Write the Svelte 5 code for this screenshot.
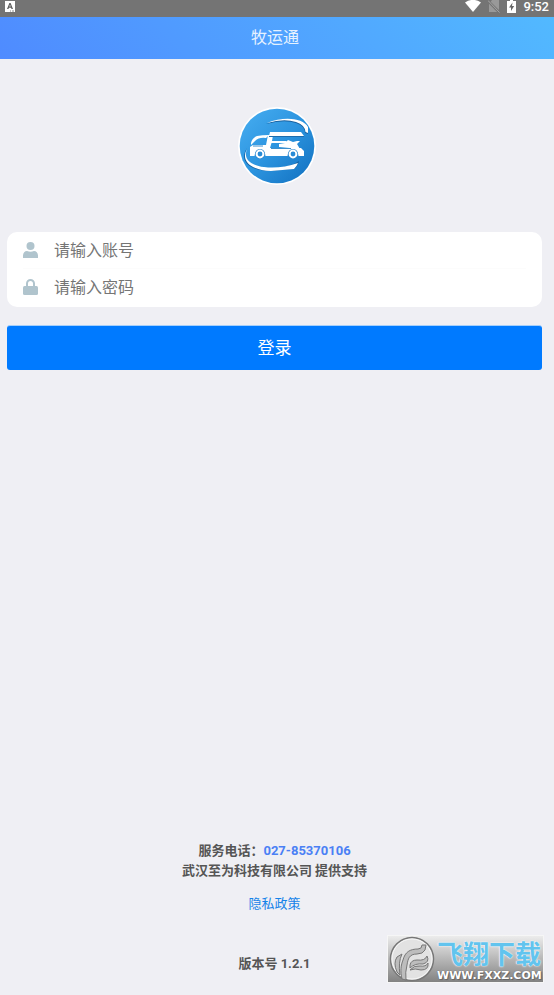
<script>
	let account = '';
	let password = '';
	const phone = '027-85370106';
	const version = '1.2.1';
	function login() {
		console.log(account);
	}
</script>

<svelte:head>
	<title>牧运通</title>
</svelte:head>

<div class="page">
	<div class="status">
		<svg width="10" height="11" viewBox="0 0 10 11">
			<rect width="10" height="11" fill="#fff" />
			<path d="M2 8 4.400 2h1.200L8 8H6.500l-.4-1.200H3.900L3.500 8zM4.300 5.600h1.400L5 3.600z" fill="#5c5c5c" />
			<path d="M5 10h1M7 10h2" stroke="#888" />
		</svg>
		<div class="status-right">
			<svg width="16" height="12" viewBox="0 0 16 12">
				<path d="M0 2.500Q8-2.800 16 2.500L8 12z" fill="#fff" />
			</svg>
			<svg width="12" height="13" viewBox="0 0 12 13">
				<path d="M4 0h7v12H1V4z" fill="#999" />
				<path d="M0 1 11 12" stroke="#747474" stroke-width="2.600" />
				<path d="M0 .5 11.500 12.500" stroke="#a6a6a6" stroke-width="1" />
			</svg>
			<svg width="9" height="13" viewBox="0 0 9 13">
				<path d="M3 0h3v1h3v12H0V1h3z" fill="#fff" />
				<path d="M5.500 2.500 2 7.500h2V11l3.200-5H5z" fill="#666" />
			</svg>
			<span>9:52</span>
		</div>
	</div>
	<header>
		<h1>牧运通</h1>
	</header>

	<main>
		<div class="brand">
			<svg width="80" height="80" viewBox="0 0 80 80" role="img" aria-label="牧运通">
				<defs>
					<linearGradient id="disc" x1="0" y1="0" x2="1" y2="1">
						<stop offset="0.100" stop-color="#42a9ee" />
						<stop offset="0.500" stop-color="#2c94df" />
						<stop offset="0.900" stop-color="#1676c5" />
					</linearGradient>
				</defs>
				<circle cx="40" cy="40" r="39" fill="#fff" />
				<circle cx="40" cy="40" r="37.300" fill="url(#disc)" />
				<!-- swooshes -->
				<path d="M29 18C47 10 66 12 71 22L71 28 68 27Q68 20 59 17Q47 13 29 18z" fill="#17609f" />
				<path d="M30 17C47 10 66 12 71 21L71 27 68.500 26Q68 19 59 16Q47 12 30 17z" fill="#fff" />
				<path d="M10 42C1 56 14 65 34 65L57 63Q61 60 62 55L57 58Q40 64 27 62C11 60 5 53 10 42z" fill="#17609f" />
				<path d="M10 43C3 56 15 64 34 65L57 63Q60 60 61 57Q43 63 27 61C13 59 6 53 10 43z" fill="#fff" />
				<!-- bus -->
				<path d="M14 37Q15 32 20 30Q25 29 32 29L29 32Q22 31 18 35L14 39z" fill="#fff" />
				<path d="M33 26H64L67 30H32z" fill="#fff" />
				<path d="M31 29h5L35 35h14l3 2H34.500L33 42h31l3 3v5h-5.500a5.500 5.500 0 0 0-11 0H28.500a5.500 5.500 0 0 0-11 0H13V41l3-2h13z" fill="#fff" />
				<path d="M42 41V38l6-1 3-3 5 2 4-1h3l-3 3 3 5z" fill="#fff" />
				<path d="M34 42.500h20M16 40h10" stroke="#3c8fcd" stroke-width="1" />
				<path d="M32 30.500h35" stroke="#1c6dae" stroke-width="1" />
				<circle cx="23" cy="48" r="5" fill="#2884cc" />
				<circle cx="23" cy="48" r="3.400" fill="#288bd6" stroke="#fff" stroke-width="2" />
				<circle cx="56" cy="48" r="5" fill="#2884cc" />
				<circle cx="56" cy="48" r="3.400" fill="#288bd6" stroke="#fff" stroke-width="2" />
			</svg>
		</div>

		<form on:submit|preventDefault={login}>
			<div class="fields">
				<label>
					<svg width="15" height="16" viewBox="0 0 15 16" fill="#b0c4cd">
						<circle cx="7.500" cy="4" r="4" />
						<path d="M0 16v-2.500C0 11 1.800 9 4 9q3.500 1.500 7 0c2.200 0 4 2 4 4.500V16z" />
					</svg>
					<input type="text" placeholder="请输入账号" aria-label="账号" bind:value={account} />
				</label>
				<label>
					<svg width="15" height="16" viewBox="0 0 15 16">
						<path d="M4 8V4.500a3.500 3.500 0 0 1 7 0V8" fill="none" stroke="#b0c4cd" stroke-width="2" />
						<rect y="7" width="15" height="9" rx="1.500" fill="#b0c4cd" />
					</svg>
					<input type="password" placeholder="请输入密码" aria-label="密码" bind:value={password} />
				</label>
			</div>
			<button type="submit">登录</button>
		</form>
	</main>

	<footer>
		<p>服务电话：<a class="phone" href="tel:{phone}">{phone}</a></p>
		<p>武汉至为科技有限公司 提供支持</p>
		<a class="privacy" href="#privacy">隐私政策</a>
		<p>版本号 {version}</p>
	</footer>

	<div class="mark">
		<svg width="46" height="46" viewBox="0 0 46 46">
			<circle cx="23" cy="23" r="21.500" fill="#e2e2e2" stroke="#777" stroke-width="1.500" />
			<circle cx="23" cy="23" r="20" fill="none" stroke="#f7f7f7" />
			<g fill="#bdbdbd" stroke="#777" stroke-width="1" stroke-linejoin="round">
				<path d="M13 43C11 35 12 29 14 24C16 16 21 13 29 13Q33 13 33 9L37 9 36 14Q34 18 28 18C20 18 19 23 18 29Q16 36 17 44z" />
				<path d="M21 29Q22 24 28 24Q36 25 38 20Q41 26 34 28Q26 27 21 32z" />
				<path d="M21 34Q25 29 31 30Q37 31 39 27Q40 34 32 34Q26 32 21 34z" />
				<path d="M8 36Q4 27 8 21L13 18Q9 26 11 39z" />
			</g>
		</svg>
		<div class="mark-text">
			<span class="mark-name">飞翔下载</span>
			<span class="mark-url">WWW.FXXZ.COM</span>
		</div>
	</div>
</div>

<style>
	:global(body) {
		margin: 0;
		background: #efeff4;
	}
	.page {
		position: relative;
		display: flex;
		flex-direction: column;
		min-height: 100vh;
		font-family: Roboto, 'Noto Sans CJK SC', sans-serif;
		color: #555;
	}
	svg {
		display: block;
		flex: none;
	}
	.status {
		display: flex;
		justify-content: space-between;
		box-sizing: border-box;
		height: 17px;
		padding: 1px 5px 0;
		background: #747474;
		color: #fff;
	}
	.status-right {
		display: flex;
		gap: 7px;
		font-size: 13px;
		font-weight: 500;
		line-height: 12px;
	}
	.status-right svg {
		margin-top: -1px;
	}
	header {
		padding-right: 4px;
		background: linear-gradient(45deg, #4f8bff, #52b9ff);
	}
	h1 {
		margin: 0;
		color: #e6f2ff;
		font-size: 16px;
		font-weight: 400;
		line-height: 42px;
		text-align: center;
	}
	main {
		flex: 1;
		padding: 0 12px 0 7px;
	}
	.brand {
		display: flex;
		justify-content: center;
		padding: 47px 0 46px 4px;
	}
	.fields {
		padding: 0 16px;
		border-radius: 10px;
		background: #fff;
	}
	label {
		display: flex;
		align-items: center;
		gap: 16px;
		height: 36px;
	}
	label + label {
		padding-bottom: 2px;
		border-top: 1px solid #fcfcfc;
	}
	input {
		flex: 1;
		min-width: 0;
		height: 32px;
		padding: 0;
		border: 0;
		outline: none;
		background: none;
		color: #333;
		font: inherit;
		font-size: 16px;
	}
	input::placeholder {
		color: #757575;
	}
	button {
		display: block;
		width: 100%;
		height: 45px;
		margin-top: 18px;
		padding: 0 0 3px;
		border: 0;
		border-top: 1px solid #a5cffb;
		border-radius: 3px;
		background: #007aff;
		color: #fff;
		font: inherit;
		font-size: 17px;
	}
	footer {
		padding: 0 5px 21px 0;
		font-size: 13px;
		font-weight: 700;
		line-height: 20px;
		text-align: center;
	}
	footer p {
		margin: 0;
	}
	footer a {
		text-decoration: none;
	}
	.phone {
		color: #4a80f5;
	}
	.privacy {
		display: block;
		margin: 13px 0 40px;
		color: #1683e9;
		font-weight: 400;
	}
	.mark {
		position: absolute;
		right: 10px;
		bottom: 12px;
		display: flex;
		align-items: center;
		gap: 2px;
		box-sizing: border-box;
		width: 157px;
		height: 48px;
		padding-left: 1px;
		border: 1px solid #f6f6f6;
		background: linear-gradient(#ececec, #828282);
	}
	.mark-text {
		display: flex;
		flex-direction: column;
		padding-top: 3px;
		white-space: nowrap;
	}
	.mark-name {
		color: #62c4ee;
		font-size: 26px;
		font-weight: 700;
		line-height: 30px;
		text-shadow: 0 0 2px #fff, 0 0 1px #fff;
	}
	.mark-url {
		color: #fff;
		font-family: 'DejaVu Sans', sans-serif;
		font-size: 11px;
		font-weight: 700;
		line-height: 12px;
		text-shadow: 0 0 1px #555, 1px 1px 1px #666;
	}
</style>
